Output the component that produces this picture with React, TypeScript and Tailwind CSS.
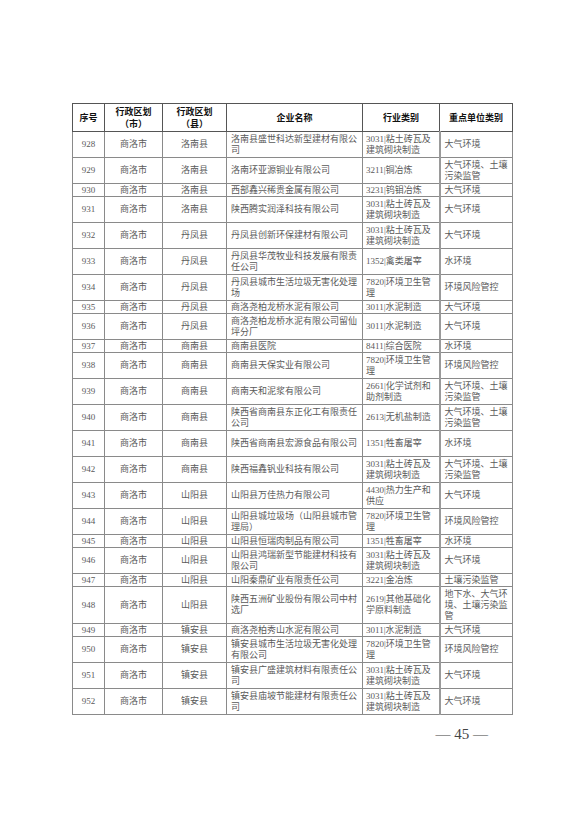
const CITY = "商洛市"

type Row = {
  no: number
  county: string
  name: string
  industry: string
  unit: string
  h: 1 | 2 | 3
}

const ROWS: Row[] = [
  { no: 928, county: "洛南县", name: "洛南县盛世科达新型建材有限公司", industry: "3031|粘土砖瓦及建筑砌块制造", unit: "大气环境", h: 2 },
  { no: 929, county: "洛南县", name: "洛南环亚源铜业有限公司", industry: "3211|铜冶炼", unit: "大气环境、土壤污染监管", h: 2 },
  { no: 930, county: "洛南县", name: "西部鑫兴稀贵金属有限公司", industry: "3231|钨钼冶炼", unit: "大气环境", h: 1 },
  { no: 931, county: "洛南县", name: "陕西腾实润泽科技有限公司", industry: "3031|粘土砖瓦及建筑砌块制造", unit: "大气环境", h: 2 },
  { no: 932, county: "丹凤县", name: "丹凤县创新环保建材有限公司", industry: "3031|粘土砖瓦及建筑砌块制造", unit: "大气环境", h: 2 },
  { no: 933, county: "丹凤县", name: "丹凤县华茂牧业科技发展有限责任公司", industry: "1352|禽类屠宰", unit: "水环境", h: 2 },
  { no: 934, county: "丹凤县", name: "丹凤县城市生活垃圾无害化处理场", industry: "7820|环境卫生管理", unit: "环境风险管控", h: 2 },
  { no: 935, county: "丹凤县", name: "商洛尧柏龙桥水泥有限公司", industry: "3011|水泥制造", unit: "大气环境", h: 1 },
  { no: 936, county: "丹凤县", name: "商洛尧柏龙桥水泥有限公司留仙坪分厂", industry: "3011|水泥制造", unit: "大气环境", h: 2 },
  { no: 937, county: "商南县", name: "商南县医院", industry: "8411|综合医院", unit: "水环境", h: 1 },
  { no: 938, county: "商南县", name: "商南县天保实业有限公司", industry: "7820|环境卫生管理", unit: "环境风险管控", h: 2 },
  { no: 939, county: "商南县", name: "商南天和泥浆有限公司", industry: "2661|化学试剂和助剂制造", unit: "大气环境、土壤污染监管", h: 2 },
  { no: 940, county: "商南县", name: "陕西省商南县东正化工有限责任公司", industry: "2613|无机盐制造", unit: "大气环境、土壤污染监管", h: 2 },
  { no: 941, county: "商南县", name: "陕西省商南县宏源食品有限公司", industry: "1351|牲畜屠宰", unit: "水环境", h: 2 },
  { no: 942, county: "商南县", name: "陕西福鑫钒业科技有限公司", industry: "3031|粘土砖瓦及建筑砌块制造", unit: "大气环境、土壤污染监管", h: 2 },
  { no: 943, county: "山阳县", name: "山阳县万佳热力有限公司", industry: "4430|热力生产和供应", unit: "大气环境", h: 2 },
  { no: 944, county: "山阳县", name: "山阳县城垃圾场（山阳县城市管理局）", industry: "7820|环境卫生管理", unit: "环境风险管控", h: 2 },
  { no: 945, county: "山阳县", name: "山阳县恒瑞肉制品有限公司", industry: "1351|牲畜屠宰", unit: "水环境", h: 1 },
  { no: 946, county: "山阳县", name: "山阳县鸿瑞新型节能建材科技有限公司", industry: "3031|粘土砖瓦及建筑砌块制造", unit: "大气环境", h: 2 },
  { no: 947, county: "山阳县", name: "山阳秦鼎矿业有限责任公司", industry: "3221|金冶炼", unit: "土壤污染监管", h: 1 },
  { no: 948, county: "山阳县", name: "陕西五洲矿业股份有限公司中村选厂", industry: "2619|其他基础化学原料制造", unit: "地下水、大气环境、土壤污染监管", h: 3 },
  { no: 949, county: "镇安县", name: "商洛尧柏秀山水泥有限公司", industry: "3011|水泥制造", unit: "大气环境", h: 1 },
  { no: 950, county: "镇安县", name: "镇安县城市生活垃圾无害化处理有限公司", industry: "7820|环境卫生管理", unit: "环境风险管控", h: 2 },
  { no: 951, county: "镇安县", name: "镇安县广盛建筑材料有限责任公司", industry: "3031|粘土砖瓦及建筑砌块制造", unit: "大气环境", h: 2 },
  { no: 952, county: "镇安县", name: "镇安县庙坡节能建材有限责任公司", industry: "3031|粘土砖瓦及建筑砌块制造", unit: "大气环境", h: 2 },
]

const rowHeight = { 1: "h-[13px]", 2: "h-[26px]", 3: "h-[37px]" }

const cell = "border border-[#8a8a8a] px-[3px] py-0 align-middle leading-[11px]"

function HeadCell({ children }: { children: React.ReactNode }) {
  return (
    <th className="border border-[#555] px-[2px] py-0 align-middle text-center text-[9px] leading-[12px] font-bold text-[#111]">
      {children}
    </th>
  )
}

export default function App() {
  return (
    <div
      className="w-[578px] h-[818px] bg-white pl-[72px] pt-[103px]"
      style={{ fontFamily: '"Liberation Serif", "Noto Sans CJK SC", serif' }}
    >
      <table className="w-[440px] table-fixed border-collapse border-[1.5px] border-[#2a2a2a] text-[9px] text-[#5a5a5a]">
        <colgroup>
          <col className="w-[32px]" />
          <col className="w-[58px]" />
          <col className="w-[64px]" />
          <col className="w-[136px]" />
          <col className="w-[77px]" />
          <col className="w-[73px]" />
        </colgroup>
        <thead style={{ fontFamily: '"Noto Sans CJK SC", sans-serif' }}>
          <tr className="h-[28px]">
            <HeadCell>序号</HeadCell>
            <HeadCell>
              <div>行政区划</div>
              <div>（市）</div>
            </HeadCell>
            <HeadCell>
              <div>行政区划</div>
              <div>（县）</div>
            </HeadCell>
            <HeadCell>企业名称</HeadCell>
            <HeadCell>行业类别</HeadCell>
            <HeadCell>重点单位类别</HeadCell>
          </tr>
        </thead>
        <tbody>
          {ROWS.map((r) => (
            <tr key={r.no} className={rowHeight[r.h]}>
              <td className={`${cell} text-center`}>{r.no}</td>
              <td className={`${cell} text-center`}>{CITY}</td>
              <td className={`${cell} text-center`}>{r.county}</td>
              <td className={`${cell} pl-[4px] text-left break-all`}>{r.name}</td>
              <td className={`${cell} text-left break-all`}>{r.industry}</td>
              <td className={`${cell} border-l-[2px] border-l-[#9a9a9a] pl-[4px] text-left break-all`}>{r.unit}</td>
            </tr>
          ))}
        </tbody>
      </table>

      <div className="mt-[10px] w-[440px] flex justify-end pr-[24px]">
        <span className="text-[15px] leading-[18px] text-[#444]">— 45 —</span>
      </div>
    </div>
  )
}
